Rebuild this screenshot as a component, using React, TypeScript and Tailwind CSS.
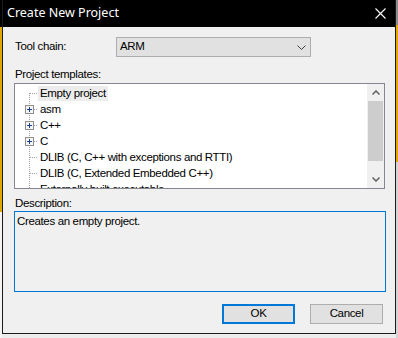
const rows = [
  { label: "Empty project", plus: false, first: true, selected: true },
  { label: "asm", plus: true },
  { label: "C++", plus: true },
  { label: "C", plus: true },
  { label: "DLIB (C, C++ with exceptions and RTTI)", plus: false },
  { label: "DLIB (C, Extended Embedded C++)", plus: false },
  { label: "Externally built executable", plus: false },
];

function Gutter({ plus, first }: { plus?: boolean; first?: boolean }) {
  return (
    <svg width="23" height="16" className="shrink-0" shapeRendering="crispEdges">
      <line x1="14.5" y1={first ? 8 : 0} x2="14.5" y2="16" stroke="#a0a0a0" strokeDasharray="1 1" />
      <line x1={plus ? 19 : 15} y1="8.5" x2="23" y2="8.5" stroke="#a0a0a0" strokeDasharray="1 1" />
      {plus && (
        <g>
          <rect x="10.5" y="4.5" width="8" height="8" fill="#f4f4f4" stroke="#8e8f8f" />
          <line x1="12" y1="8.5" x2="17" y2="8.5" stroke="#1f3f8f" />
          <line x1="14.5" y1="6" x2="14.5" y2="11" stroke="#1f3f8f" />
        </g>
      )}
    </svg>
  );
}

export default function App() {
  return (
    <div className="w-[398px] h-[338px] flex overflow-hidden bg-[#ececec] font-['Liberation_Sans',Arial,sans-serif] text-[11.5px] tracking-[-0.35px] text-black">
      {/* background strips */}
      <div className="w-[2px] h-[338px] shrink-0 bg-[linear-gradient(to_bottom,#000_0px,#000_27px,#e0a800_27px,#e0a800_212px,#f4f4f4_212px)]" />

      {/* dialog window */}
      <div className="w-[394px] h-[334px] shrink-0 flex flex-col border-x border-b border-[#1c1c1c] bg-[#f0f0f0]">
        {/* title bar */}
        <div className="h-[27px] shrink-0 bg-black flex items-center justify-between pl-[4px] pr-[9px]">
          <span className="text-white text-[12.5px] tracking-normal font-['Noto_Sans',sans-serif]">Create New Project</span>
          <svg width="11" height="11" viewBox="0 0 11 11">
            <path d="M0.5 0.5 L10.5 10.5 M10.5 0.5 L0.5 10.5" stroke="#fff" strokeWidth="1.1" fill="none" />
          </svg>
        </div>

        <div className="flex flex-col pl-[11px]">
          {/* tool chain */}
          <div className="mt-[10px] h-[20px] flex items-center">
            <span className="w-[102px] pl-[1px]">Tool chain:</span>
            <div className="w-[195px] h-[20px] flex items-center justify-between border border-[#adadad] bg-[#e1e1e1] pl-[3px] pr-[4px]">
              <span>ARM</span>
              <svg width="9" height="5" viewBox="0 0 9 5">
                <path d="M0.5 0.5 L4.5 4.5 L8.5 0.5" stroke="#404040" fill="none" />
              </svg>
            </div>
          </div>

          <div className="mt-[11px] h-[12px] leading-[12px] pl-[1px]">Project templates:</div>

          {/* tree */}
          <div className="mt-[3px] w-[371px] h-[106px] flex border border-[#828790] bg-white">
            <div className="flex-1 pt-[1px] overflow-hidden">
              {rows.map((r) => (
                <div key={r.label} className="h-[16px] flex items-center whitespace-nowrap">
                  <Gutter plus={r.plus} first={r.first} />
                  <span className={`h-[15px] leading-[15px] px-[2px] ${r.selected ? "bg-[#ececec]" : ""}`}>{r.label}</span>
                </div>
              ))}
            </div>
            <div className="w-[17px] shrink-0 flex flex-col bg-[#f0f0f0]">
              <div className="h-[17px] flex items-center justify-center">
                <svg width="8" height="5" viewBox="0 0 8 5">
                  <path d="M0.5 4.5 L4 1 L7.5 4.5" stroke="#606060" strokeWidth="1.5" fill="none" />
                </svg>
              </div>
              <div className="h-[60px] mx-[1px] bg-[#cdcdcd]" />
              <div className="flex-1" />
              <div className="h-[17px] flex items-center justify-center">
                <svg width="8" height="5" viewBox="0 0 8 5">
                  <path d="M0.5 0.5 L4 4 L7.5 0.5" stroke="#606060" strokeWidth="1.5" fill="none" />
                </svg>
              </div>
            </div>
          </div>

          <div className="mt-[8px] h-[12px] leading-[12px] pl-[1px]">Description:</div>

          <div className="mt-[2px] w-[372px] h-[81px] border border-[#0078d7] pl-[2px] pt-[3px] leading-[12px]">
            Creates an empty project.
          </div>

          {/* buttons */}
          <div className="mt-[12px] ml-[208px] flex gap-[15px]">
            <button className="w-[73px] h-[20px] border-2 border-[#0078d7] bg-[#e1e1e1] flex items-center justify-center">OK</button>
            <button className="w-[73px] h-[20px] border border-[#adadad] bg-[#e1e1e1] flex items-center justify-center">Cancel</button>
          </div>
        </div>
      </div>

      <div className="w-[2px] h-[338px] shrink-0 bg-[linear-gradient(to_bottom,#8c8c8c_0px,#8c8c8c_25px,#e0a800_25px,#e0a800_162px,#d4d4d4_162px)]" />
    </div>
  );
}
